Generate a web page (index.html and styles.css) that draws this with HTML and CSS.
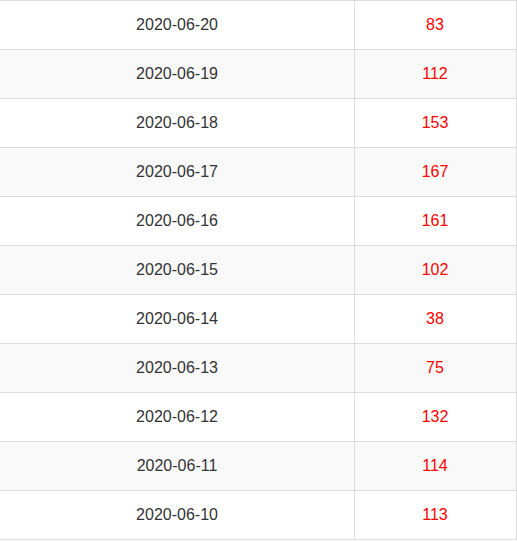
FILE: index.html
```html
<!DOCTYPE html>
<html>
<head>
<meta charset="utf-8">
<link rel="stylesheet" href="styles.css">
</head>
<body>
<div class="table">
  <div class="row"><div class="cell date">2020-06-20</div><div class="cell num">83</div></div>
  <div class="row alt"><div class="cell date">2020-06-19</div><div class="cell num">112</div></div>
  <div class="row"><div class="cell date">2020-06-18</div><div class="cell num">153</div></div>
  <div class="row alt"><div class="cell date">2020-06-17</div><div class="cell num">167</div></div>
  <div class="row"><div class="cell date">2020-06-16</div><div class="cell num">161</div></div>
  <div class="row alt"><div class="cell date">2020-06-15</div><div class="cell num">102</div></div>
  <div class="row"><div class="cell date">2020-06-14</div><div class="cell num">38</div></div>
  <div class="row alt"><div class="cell date">2020-06-13</div><div class="cell num">75</div></div>
  <div class="row"><div class="cell date">2020-06-12</div><div class="cell num">132</div></div>
  <div class="row alt"><div class="cell date">2020-06-11</div><div class="cell num">114</div></div>
  <div class="row last"><div class="cell date">2020-06-10</div><div class="cell num">113</div></div>
</div>
</body>
</html>
```
FILE: styles.css
```css
html, body {
  margin: 0;
  padding: 0;
  background: #fff;
}
.table {
  width: 517px;
  font-family: "Liberation Sans", Arial, sans-serif;
  font-size: 16px;
  color: #333;
}
.row {
  display: grid;
  grid-template-columns: 354px 161px;
  height: 49px;
  box-sizing: border-box;
  border-top: 1px solid #ddd;
  border-right: 1px solid #ddd;
  background: #fff;
}
.row.alt {
  background: #f9f9f9;
}
.row.last {
  height: 50px;
  border-bottom: 1px solid #ddd;
}
.cell {
  display: flex;
  align-items: center;
  justify-content: center;
}
.num {
  border-left: 1px solid #ddd;
  color: #f00;
}
```
